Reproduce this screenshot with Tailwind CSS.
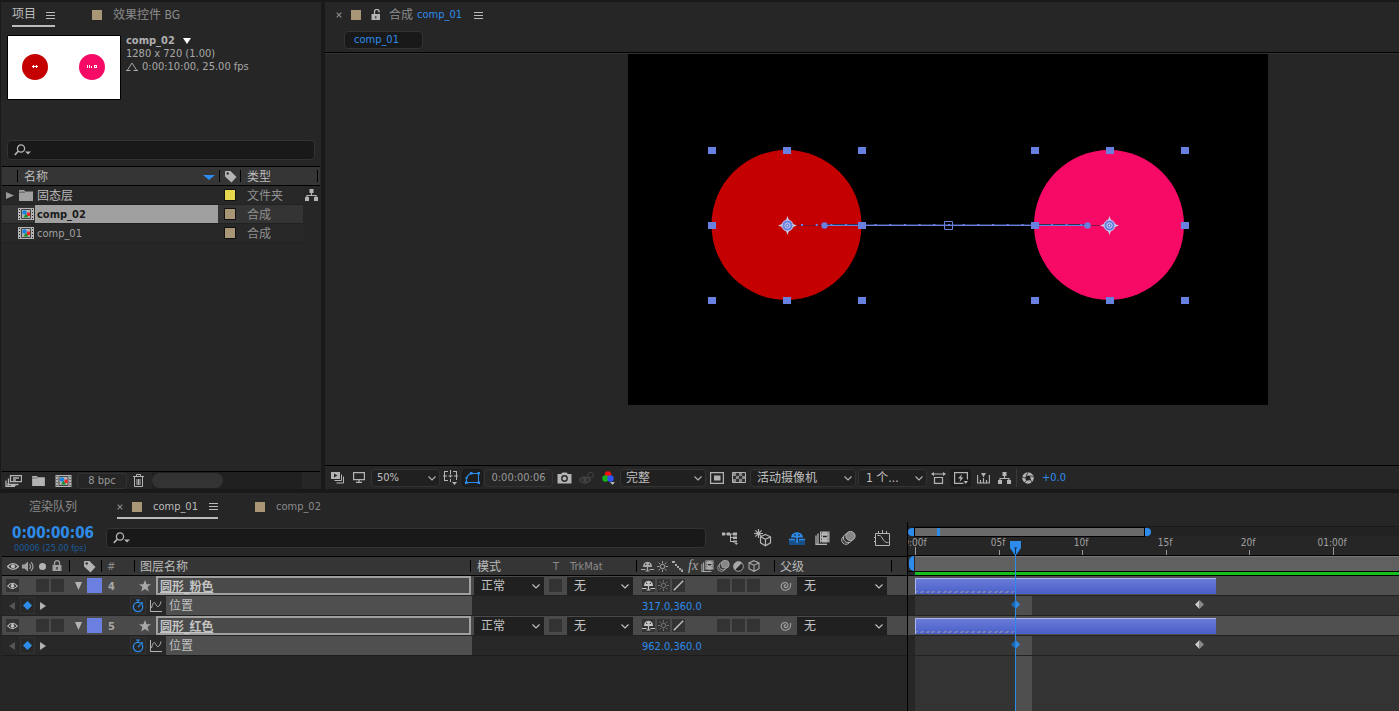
<!DOCTYPE html>
<html lang="zh-CN">
<head>
<meta charset="utf-8">
<title>comp_01</title>
<script src="https://cdn.jsdelivr.net/npm/@tailwindcss/browser@4"></script>
</head>
<body class="bg-[#191919] text-[#a0a0a0] font-['DejaVu_Sans_Condensed','Noto_Sans_CJK_SC',sans-serif] text-[11px] leading-4 overflow-hidden">
<svg class="hidden">
  <symbol id="menu" viewBox="0 0 9 9"><path d="M0 1.5h9M0 4.5h9M0 7.5h9" stroke="currentColor" fill="none"/></symbol>
  <symbol id="x" viewBox="0 0 6 6"><path d="M.7.7l4.6 4.6M5.3.7L.7 5.3" stroke="currentColor" stroke-width="1.2"/></symbol>
  <symbol id="chev" viewBox="0 0 8 5"><path d="M.5.5L4 4 7.5.5" stroke="currentColor" fill="none" stroke-width="1.1"/></symbol>
  <symbol id="search" viewBox="0 0 17 12"><circle cx="7" cy="4.5" r="3.6" fill="none" stroke="currentColor" stroke-width="1.3"/><path d="M4.5 7L.8 10.800" stroke="currentColor" stroke-width="1.7"/><path d="M11 7.5h6l-3 3z" fill="currentColor"/></symbol>
  <symbol id="tag" viewBox="0 0 13 13"><path d="M1 2Q1 1 2 1h4.500L12.500 7 7.500 12.500 1 6.500z" fill="currentColor"/><circle cx="3.700" cy="3.500" r="1.200" fill="#333"/></symbol>
  <symbol id="folder" viewBox="0 0 14 11"><path d="M0 0h5l1.500 1.500H14V11H0z" fill="currentColor"/><path d="M0 2.200h6" stroke="#333" stroke-width=".6"/></symbol>
  <symbol id="comp" viewBox="0 0 16 12"><path d="M0 0h16v12H0z" fill="#b4b4b4"/><path d="M1 1h1v1H1zM1 4h1v1H1zM1 7h1v1H1zM1 10h1v1H1zM14 1h1v1h-1zM14 4h1v1h-1zM14 7h1v1h-1zM14 10h1v1h-1z" fill="#222"/><path d="M3.500 1.500h9v9h-9z" fill="#b4b4b4" stroke="#444"/><path d="M9 4.500h3v3.500H9z" fill="#f22"/><circle cx="6.500" cy="4.500" r="2.200" fill="#1683e8"/><path d="M8 5.500l2.500 4h-5z" fill="#15922a"/></symbol>
  <symbol id="eye" viewBox="0 0 12 9"><path d="M.5 4.500Q6-1.500 11.500 4.500 6 10.500.5 4.500z" fill="none" stroke="currentColor" stroke-width="1.200"/><circle cx="6" cy="4.300" r="2.100" fill="currentColor"/></symbol>
  <symbol id="lock" viewBox="0 0 10 12"><path d="M.5 5h9v6h-9z" fill="currentColor"/><path d="M2.500 5V3.200a2.500 2.500 0 0 1 5 0V5" fill="none" stroke="currentColor" stroke-width="1.300"/><path d="M5 7v2.500" stroke="#222" stroke-width="1.200"/></symbol>
  <symbol id="shy" viewBox="0 0 13 11"><path d="M2 6Q2 1 6.500.8 11 1 11 6z" fill="currentColor"/><path d="M4 3.300h1.300M7.700 3.300H9" stroke="#222"/><path d="M0 8.500h4.500M8.500 8.500H13M6.500 5v5.500M4.500 10h4" stroke="currentColor" stroke-width="1.200"/></symbol>
  <symbol id="sun" viewBox="0 0 11 11"><circle cx="5.500" cy="5.500" r="2.200" fill="none" stroke="currentColor"/><path d="M5.500 0v2.500M5.500 8.500V11M0 5.500h2.500M8.500 5.500H11M1.600 1.600l1.600 1.600M7.800 7.800l1.600 1.600M9.400 1.600L7.800 3.200M3.200 7.800L1.600 9.400" stroke="currentColor" stroke-width=".9"/></symbol>
  <symbol id="slash" viewBox="0 0 11 11"><path d="M.8 10.200L10.200.8" stroke="currentColor" stroke-width="1.400"/></symbol>
  <symbol id="film" viewBox="0 0 15 14"><path d="M5 .5h9.500v11H5z" fill="currentColor"/><path d="M6.500 1.500v10M13 1.500v10" stroke="#262626" stroke-dasharray="1 2" stroke-width="1"/><path d="M8 5.500h3.800" stroke="#222" stroke-width="1.400"/><path d="M3 2.500v11h9M1 4.500V13.500h2" fill="none" stroke="currentColor" stroke-width="1.300"/></symbol>
  <symbol id="blur" viewBox="0 0 15 14"><circle cx="5" cy="9" r="4.300" fill="#333" stroke="currentColor"/><circle cx="7" cy="7" r="4.600" fill="#333" stroke="currentColor"/><circle cx="9.500" cy="5" r="4.600" fill="#868686" stroke="currentColor"/></symbol>
  <symbol id="cube" viewBox="0 0 12 12"><path d="M6 .7l5 2.200v5.800L6 11.300 1 8.700V2.900zM1 2.900l5 2.300 5-2.300M6 5.200v6" fill="none" stroke="currentColor" stroke-width="1.100"/></symbol>
  <symbol id="swirl" viewBox="0 0 13 13"><path d="M7 6.500C6 5 4.300 6.500 5.500 8 7 9.500 9.600 8 9 5.500 8 2.800 4 3 2.500 5.500 1 9 4 11.500 7 11.300c3.500-.3 5.500-4 4.500-7.300" fill="none" stroke="currentColor" stroke-width="1.100"/></symbol>
  <symbol id="star" viewBox="0 0 12 12"><path d="M6 0l1.600 4.300H12L8.500 7l1.300 4.600L6 8.900l-3.800 2.700L3.500 7 0 4.300h4.400z" fill="currentColor"/></symbol>
  <symbol id="watch" viewBox="0 0 11 14"><circle cx="5.500" cy="8" r="4.700" fill="none" stroke="currentColor" stroke-width="1.300"/><path d="M5.500 8L8 5.500M3.500 1h4M5.500 1v2M9 3l1.500 1.500" stroke="currentColor" stroke-width="1.200"/></symbol>
  <symbol id="graph" viewBox="0 0 12 12"><path d="M.5 0v11.500H12M1.500 8C4-1 5 3 6.500 5.500S10 6 11 1.500" fill="none" stroke="currentColor"/></symbol>
  <symbol id="flow" viewBox="0 0 13 12"><path d="M4.500 0h4v4h-4zM0 8h4v4H0zM9 8h4v4H9z" fill="currentColor"/><path d="M6.500 4v2.500M2 8.500V6.500h9v2" stroke="currentColor" fill="none" stroke-width="1.200"/></symbol>
  <symbol id="key" viewBox="0 0 10 10"><path d="M5 0L10 5 5 10 0 5z" fill="currentColor"/></symbol>
</svg>

<div class="flex h-screen flex-col pt-[2px]">
  <div class="flex h-[487px] shrink-0 gap-1">
    <!-- Project panel -->
    <section class="flex w-[321px] shrink-0 flex-col border-l border-[#191919] bg-[#262626]">
      <div class="flex h-7 pl-[11px]">
        <button class="flex h-[25px] items-center gap-[10px] border-b-2 border-[#bbb] text-xs text-[#bbb]">项目<svg class="mt-1 size-[9px]"><use href="#menu"/></svg></button>
        <button class="ml-[37px] flex h-[25px] items-center gap-[11px] text-xs text-[#8b8b8b]"><span class="size-[10px] bg-[#a89677]"></span>效果控件 BG</button>
      </div>
      <div class="flex gap-[5px] pl-[6px] pt-[5px]">
        <svg class="h-[65px] w-[114px] shrink-0" viewBox="0 0 114 65"><path d="M.5.5h113v64H.5z" fill="#fff" stroke="#000"/><circle cx="28" cy="32" r="13" fill="#c40000"/><circle cx="85" cy="32" r="13" fill="#f60a66"/><path d="M25 31.500h6M26.500 30v3M29.500 30v3M80.500 30v3M82.500 30v3M84.500 31v2M87 30.500h3M87 32.500h3M87.500 30v3M89.500 30v3" stroke="#fff" fill="none"/></svg>
        <div class="-mt-px leading-[13px] text-[#a8a8a8]">
          <div class="flex items-center gap-2 font-bold text-[#b0b0b0]">comp_02<svg class="h-[6px] w-2" viewBox="0 0 8 6"><path d="M0 0h8L4 6z" fill="#fff"/></svg></div>
          <div>1280 x 720 (1.00)</div>
          <div class="flex items-center gap-1"><svg class="h-[9px] w-3" viewBox="0 0 12 9"><path d="M1.500 8L6 1l4.500 7M0 8.500h4.500M7.500 8.500H12" fill="none" stroke="currentColor"/></svg>0:00:10:00, 25.00 fps</div>
        </div>
      </div>
      <label class="mx-[6px] mt-10 flex h-5 items-center rounded-sm border border-[#333] bg-[#191919] px-[6px] text-[#b4b4b4]"><svg class="h-3 w-[17px]"><use href="#search"/></svg><input aria-label="搜索项目" class="ml-1 min-w-0 flex-1 bg-transparent outline-none"></label>
      <div class="mx-px mt-[6px] flex h-5 items-center border-y border-black bg-[#353535] text-xs text-[#bbb]">
        <span class="h-3 w-[16px] border-r border-black"></span>
        <span class="ml-[6px] flex-1 pt-[2px]">名称</span>
        <svg class="mt-px h-[6px] w-3" viewBox="0 0 12 6"><path d="M0 1h12L6 6z" fill="#2d8ceb"/></svg>
        <span class="ml-1 h-3 border-r border-black"></span>
        <svg class="ml-1 size-[13px] text-[#b4b4b4]"><use href="#tag"/></svg>
        <span class="ml-[3px] h-3 border-r border-black"></span>
        <span class="ml-[6px] w-[70px] pt-[2px]">类型</span>
        <span class="mr-[2px] h-3 border-r border-black"></span>
      </div>
      <div class="flex flex-1">
        <div class="ml-px flex-1">
          <div class="flex h-[19px] items-center border-b border-[#222] bg-[#282828] text-xs"><svg class="ml-1 h-[7px] w-2" viewBox="0 0 8 7"><path d="M0 0l8 3.500L0 7z" fill="#999"/></svg><svg class="ml-[5px] h-[11px] w-[14px] text-[#a0a0a0]"><use href="#folder"/></svg><span class="ml-1 flex-1 pt-[2px] text-[#bbb]">固态层</span><span class="size-[10px] bg-[#e5d84c] outline outline-[#111]"></span><span class="ml-3 w-14 pt-[2px] text-[#909090]">文件夹</span></div>
          <div class="flex h-[19px] items-center border-b border-[#222] bg-[#343434] text-xs"><svg class="ml-4 h-3 w-4"><use href="#comp"/></svg><span class="ml-px h-[18px] flex-1 bg-[#a0a0a0] pl-[2px] pt-px text-[11px] font-bold leading-[18px] text-[#1a1a1a]">comp_02</span><span class="ml-[7px] size-[10px] bg-[#a89677] outline outline-[#111]"></span><span class="ml-3 w-14 pt-[2px] text-[#909090]">合成</span></div>
          <div class="flex h-[19px] items-center border-b border-[#222] bg-[#282828] text-xs"><svg class="ml-4 h-3 w-4"><use href="#comp"/></svg><span class="ml-[3px] flex-1 pt-[2px] text-[11px] text-[#a0a0a0]">comp_01</span><span class="size-[10px] bg-[#a89677] outline outline-[#111]"></span><span class="ml-3 w-14 pt-[2px] text-[#909090]">合成</span></div>
        </div>
        <div class="w-[18px] pt-[3px]"><svg class="ml-[2px] h-3 w-[13px] text-[#b4b4b4]"><use href="#flow"/></svg></div>
      </div>
      <div class="mx-px flex h-[18px] items-center border-t border-black text-[#b4b4b4]">
        <button aria-label="解释素材" class="ml-[3px]"><svg class="h-3 w-[17px]" viewBox="0 0 17 12"><path d="M5.500.7h11v6h-11zM8 3h6M8 5h3M3.500 3.500v6h10M1 5.500v6h9M3 8v3M6 10h5" fill="none" stroke="currentColor" stroke-width="1.300"/></svg></button>
        <button aria-label="新建文件夹" class="ml-[10px]"><svg class="h-[10px] w-[13px]"><use href="#folder"/></svg></button>
        <button aria-label="新建合成" class="ml-[10px]"><svg class="h-3 w-[17px]"><use href="#comp"/></svg></button>
        <button class="ml-[5px] h-4 w-[50px] rounded-sm border border-[#333] leading-[14px] text-[#999]">8 bpc</button>
        <button aria-label="删除" class="ml-[6px]"><svg class="h-[13px] w-[11px]" viewBox="0 0 11 13"><path d="M0 2.500h11M3.500 2V.5h4V2M1.500 3v9.500h8V3M4 5v6M5.500 5v6M7 5v6" fill="none" stroke="currentColor"/></svg></button>
        <div class="ml-2 h-full w-[150px] bg-[#202020]"><div class="mt-px h-[15px] w-[71px] rounded-full bg-[#333]"></div></div>
      </div>
    </section>

    <!-- Composition viewer -->
    <section class="flex min-w-0 flex-1 flex-col bg-[#262626]">
      <div class="flex h-6 items-center pl-[11px] pt-[2px] text-xs text-[#8b8b8b]">
        <svg class="size-[6px]"><use href="#x"/></svg>
        <span class="ml-[9px] size-[10px] bg-[#a89677]"></span>
        <svg class="ml-[10px] h-3 w-[10px] text-[#b4b4b4]" viewBox="0 0 10 12"><path d="M.5 5h8.500v6H.5z" fill="currentColor"/><path d="M3.500 5V2.700a2.300 2.300 0 0 1 4.600 0V3.500" fill="none" stroke="currentColor" stroke-width="1.300"/><path d="M4.800 7v2.500" stroke="#222"/></svg>
        <span class="ml-2">合成</span><span class="ml-1 pt-px text-[11px] text-[#2d8ceb]">comp_01</span>
        <svg class="ml-3 size-[9px] text-[#bbb]"><use href="#menu"/></svg>
      </div>
      <div class="flex h-[27px] border-b border-black pl-[19px] pt-[5px]"><button class="h-[18px] w-[79px] rounded-sm border border-[#333] bg-[#191919] pl-[9px] text-left text-[#2d8ceb]">comp_01</button></div>
      <div class="flex-1 overflow-hidden border-t border-[#333]">
        <svg class="ml-[303px] h-[351px] w-[640px] bg-black" viewBox="0 0 640 351">
          <circle cx="158.500" cy="171" r="75" fill="#c40000"/><circle cx="481" cy="171" r="75" fill="#f60a66"/>
          <path d="M168 171.500h28M460 171.500h12" stroke="#501030" stroke-opacity=".6"/>
          <path d="M196 170.500h264" stroke="#2c3358"/><path d="M196 171.500h264" stroke="#6880e0"/>
          <path d="M173 171h290" stroke="#6880e0" stroke-width="2" stroke-dasharray="2 12.700"/>
          <circle cx="196.500" cy="171.500" r="3.200" fill="#6880e0"/><circle cx="459.500" cy="171.500" r="3.200" fill="#6880e0"/>
          <path d="M316.500 167.500h8v8h-8z" fill="none" stroke="#6880e0"/>
          <g fill="#6880e0"><path id="hs" d="M80 93h8v7h-8zM155 93h8v7h-8zM230 93h8v7h-8zM80 168h8v7h-8zM230 168h8v7h-8zM80 243h8v7h-8zM155 243h8v7h-8zM230 243h8v7h-8z"/><use href="#hs" x="323"/></g>
          <g id="anc"><path d="M159.500 162l2.500 7 7 2.500-7 2.500-2.500 7-2.500-7-7-2.500 7-2.500z" fill="#c9cbe6"/><circle cx="159.500" cy="171.500" r="5.500" fill="#6880e0" stroke="#ccd0ee"/><circle cx="159.500" cy="171.500" r="2.600" fill="none" stroke="#ccd0ee"/><circle cx="159.500" cy="171.500" r=".7" fill="#fff"/></g><use href="#anc" x="322"/>
        </svg>
      </div>
      <div class="flex h-6 items-center border-t border-black text-[#b4b4b4]">
        <svg class="ml-[6px] h-3 w-[13px]" viewBox="0 0 13 12"><path d="M0 0h9v7H0z" fill="currentColor"/><path d="M3 1.500l3.500 2L3 5.500z" fill="#262626"/><path d="M10.500 2.500v6h-7M12.500 4.500v6.500h-7" stroke="currentColor" fill="none"/></svg>
        <svg class="ml-[9px] h-[11px] w-3" viewBox="0 0 12 11"><path d="M.6.6h10.800v7H.6zM6 7.500V10M3 10.400h6" stroke="currentColor" fill="none" stroke-width="1.200"/></svg>
        <div class="relative ml-[6px]"><select aria-label="放大率" class="h-[18px] w-[69px] appearance-none rounded-sm border border-[#333] bg-[#202020] pl-[5px] text-[#c0c0c0]"><option>50%</option></select><svg class="pointer-events-none absolute right-1 top-[7px] h-[5px] w-2"><use href="#chev"/></svg></div>
        <svg class="ml-[3px] h-[15px] w-[15px]" viewBox="0 0 15 15"><path d="M1.500 2v8M13.500 2v8M1 1.500h4M10 1.500h4M1 10.500h4M7.500 0v4M7.500 9v3M0 6h4M11 6h4M5.500 6h4M7.500 4.500v3" fill="none" stroke="currentColor"/><path d="M9 12h5l-2.500 3z" fill="currentColor"/></svg>
        <button aria-label="切换蒙版" class="ml-[4px] flex h-[18px] w-[21px] items-center justify-center rounded-sm border border-[#191919] bg-[#1d1d1d] text-[#2d8ceb]"><svg class="h-3 w-[15px] shrink-0" viewBox="0 0 15 12"><path d="M1.500 10.500V6.500Q2 3.500 5.500 1.500h8v9z" fill="none" stroke="currentColor" stroke-width="1.100"/><path d="M0 9.500h2.500V12H0zM12.500 9.500H15V12h-2.500zM12.500 0H15v2.500h-2.500zM5 0h2.500v2.500H5zM.5 5h2v2h-2z" fill="currentColor"/></svg></button>
        <button class="ml-px h-[18px] w-[69px] rounded-sm border border-[#333] text-[#999]">0:00:00:06</button>
        <svg class="ml-1 h-3 w-[15px]" viewBox="0 0 15 12"><path d="M.5 2h3.500L5.500.5h4L11 2h3.500v9.500H.5z" fill="currentColor"/><circle cx="7.500" cy="6.500" r="2.700" fill="none" stroke="#262626" stroke-width="1.400"/></svg>
        <svg class="ml-[7px] h-3 w-[15px] text-[#444]" viewBox="0 0 15 12"><path d="M.5 8Q6 2 11.500 8 6 14 .5 8z" fill="none" stroke="currentColor" stroke-width="1.300"/><circle cx="6" cy="8" r="2" fill="currentColor"/><circle cx="11.500" cy="3" r="2.700" fill="none" stroke="currentColor"/></svg>
        <svg class="ml-2 h-[14px] w-[14px]" viewBox="0 0 14 14"><circle cx="6" cy="3.500" r="3.200" fill="#f21010"/><circle cx="3.500" cy="7.500" r="3.200" fill="#16b416"/><circle cx="8.500" cy="7.500" r="3.200" fill="#2f55f5"/><path d="M8 11h5l-2.500 3z" fill="currentColor"/></svg>
        <div class="relative ml-1"><select aria-label="分辨率" class="h-[18px] w-[86px] appearance-none rounded-sm border border-[#333] bg-[#202020] pl-[5px] text-xs leading-4 text-[#c0c0c0]"><option>完整</option></select><svg class="pointer-events-none absolute right-1 top-[7px] h-[5px] w-2"><use href="#chev"/></svg></div>
        <svg class="ml-[4px] h-3 w-[14px]" viewBox="0 0 14 12"><path d="M.6.6h12.800v10.800H.6z" fill="none" stroke="currentColor" stroke-width="1.200"/><path d="M4 3.500h6.500v5H4z" fill="currentColor"/></svg>
        <svg class="ml-2 h-[11px] w-[14px]" viewBox="0 0 14 11"><path d="M.5.5h13v10H.5z" fill="#333" stroke="currentColor"/><path d="M1 1h3v3H1zM7 1h3v3H7zM4 4h3v3H4zM10 4h3v3h-3zM1 7h3v3H1zM7 7h3v3H7z" fill="#8a8a8a"/></svg>
        <div class="relative ml-1"><select aria-label="3D 视图" class="h-[18px] w-[106px] appearance-none rounded-sm border border-[#333] bg-[#202020] pl-[6px] text-xs leading-4 text-[#c0c0c0]"><option>活动摄像机</option></select><svg class="pointer-events-none absolute right-1 top-[7px] h-[5px] w-2"><use href="#chev"/></svg></div>
        <div class="relative ml-[2px]"><select aria-label="视图布局" class="h-[18px] w-[69px] appearance-none rounded-sm border border-[#333] bg-[#202020] pl-[7px] text-xs leading-4 text-[#c0c0c0]"><option>1 个...</option></select><svg class="pointer-events-none absolute right-1 top-[7px] h-[5px] w-2"><use href="#chev"/></svg></div>
        <svg class="ml-1 h-3 w-[15px]" viewBox="0 0 15 12"><path d="M1 2h13M3.500 5.500h8v5.800h-8z" fill="none" stroke="currentColor" stroke-width="1.200"/><path d="M3 0v4L0 2zM12 0v4l3-2z" fill="currentColor"/></svg>
        <button aria-label="快速预览" class="ml-1 flex h-[18px] w-[21px] items-center justify-center bg-[#1d1d1d]"><svg class="h-3 w-[14px]" viewBox="0 0 14 12"><path d="M9.500 11.400H.6V.6h12.800v7" fill="none" stroke="currentColor" stroke-width="1.200"/><path d="M8 2L4 6.500h2.500L5.500 10 9.500 5.500H7zM9.500 9h4.500l-2.200 3z" fill="currentColor"/></svg></button>
        <svg class="ml-[6px] h-3 w-[13px]" viewBox="0 0 13 12"><path d="M.6 3v8h11.800V3M3.500 8v3M6.500 6v5M9.500 8v3M6.500 5V2" fill="none" stroke="currentColor" stroke-width="1.100"/><path d="M4 1h5L6.500 5z" fill="currentColor"/></svg>
        <svg class="ml-2 h-3 w-[13px]"><use href="#flow"/></svg>
        <span class="ml-[5px] h-[18px] border-r border-[#3a3a3a]"></span>
        <svg class="ml-[5px] size-3" viewBox="0 0 12 12"><circle cx="6" cy="6" r="4.200" fill="none" stroke="currentColor" stroke-width="3.200"/><path d="M4 4L6 .3M7.500 3.800l4 .7M8.300 7l1.500 3.500M5 8.200L2 11M3.700 6L0 5" stroke="#262626" stroke-width=".8"/></svg>
        <span class="ml-2 text-[#2d8ceb]">+0.0</span>
      </div>
    </section>
  </div>

  <!-- Timeline panel -->
  <section class="mt-1 flex min-h-0 flex-1 flex-col bg-[#262626]">
    <div class="flex h-[29px] items-start text-xs text-[#8b8b8b]">
      <button class="ml-[29px] h-[26px] w-12 pt-px">渲染队列</button>
      <button class="ml-10 flex h-[26px] w-[101px] items-center border-b-2 border-[#bbb] pt-[3px] text-[11px] text-[#bbb]"><svg class="size-[6px] text-[#888]"><use href="#x"/></svg><span class="ml-[9px] size-[10px] bg-[#a89677]"></span><span class="ml-[11px] flex-1 pt-px text-left">comp_01</span><svg class="size-[9px]"><use href="#menu"/></svg></button>
      <button class="ml-[37px] flex h-[26px] items-center gap-[11px] pt-px text-[11px]"><span class="size-[10px] bg-[#a89677]"></span><span class="pt-[2px]">comp_02</span></button>
    </div>
    <div class="flex min-h-0 flex-1">
      <div class="flex w-[908px] shrink-0 flex-col border-r border-black">
        <div class="flex h-[34px] pl-3 text-[#b4b4b4]">
          <div class="w-[94px] shrink-0"><div class="text-[15px] font-bold leading-[22px] text-[#2d8ceb]">0:00:00:06</div><div class="pl-[2px] text-[9px] leading-[9px] text-[#1b5c9c]">00006 (25.00 fps)</div></div>
          <label class="mt-[6px] flex h-5 w-[600px] items-center rounded-sm border border-[#333] bg-[#191919] px-[6px]"><svg class="h-3 w-[17px]"><use href="#search"/></svg><input aria-label="搜索图层" class="ml-1 min-w-0 flex-1 bg-transparent outline-none"></label>
          <div class="flex h-8 items-center">
            <svg class="ml-4 h-[13px] w-4" viewBox="0 0 16 13"><path d="M3 2h9M8.500 2v8M8.500 5.500h5M8.500 9.500h3" stroke="currentColor" fill="none"/><path d="M0 .5h3v3H0zM5 .5h3v3H5zM11 .5h4v3h-4zM11 4.500h4v2.500h-4zM11 8.500h4v2h-4zM12.500 11h3.500l-1.700 2z" fill="currentColor"/></svg>
            <svg class="ml-4 size-[18px]" viewBox="0 0 18 18"><path d="M4.500 0v9M0 4.500h9M1.300 1.300l6.400 6.400M7.700 1.300L1.300 7.700" stroke="currentColor" stroke-width="1.100"/><circle cx="4.500" cy="4.500" r="2" fill="currentColor"/><path d="M11.500 5.500l5 2.300v6l-5 3-5-3v-6zM6.500 7.800l5 2.500 5-2.500M11.500 10.300v6" fill="#262626" stroke="currentColor" stroke-width="1.200"/></svg>
            <svg class="ml-[17px] h-[14px] w-4 text-[#2d8ceb]" viewBox="0 0 16 14"><path d="M0 9h16v5H0z" fill="#174f86"/><path d="M2 6.500Q2.500 1.500 8 1.200 13.500 1.500 14 6.500z" fill="currentColor"/><path d="M5 4h2M9 4h2" stroke="#222"/><path d="M0 8.500h6M10 8.500h6M8 5v7" stroke="currentColor" stroke-width="1.600"/></svg>
            <svg class="ml-[10px] h-[14px] w-[15px]"><use href="#film"/></svg>
            <svg class="ml-[11px] h-[14px] w-[15px]"><use href="#blur"/></svg>
            <svg class="ml-[18px] size-[17px]" viewBox="0 0 17 17"><path d="M1.500 3.500h14v12h-14zM4.500 1v2M8.500 0v3M12.500 1v2M3.500 5.500h2c3 0 3 7 8 7h1M0 7.500h1M0 11.500h1" fill="none" stroke="currentColor"/></svg>
          </div>
        </div>
        <div class="ml-[2px] flex h-5 shrink-0 items-center border-y border-black bg-[#353535] text-xs text-[#bbb]">
          <div class="flex h-3 w-[68px] items-center border-r border-black pl-[5px]">
            <svg class="h-[9px] w-3"><use href="#eye"/></svg>
            <svg class="ml-[3px] h-[11px] w-3 text-[#a0a0a0]" viewBox="0 0 12 11"><path d="M0 3.500h2.500L6 .5v10L2.500 7.500H0z" fill="currentColor"/><path d="M7.500 3q2 2.500 0 5M9 1.200q4 4.300 0 8.600" fill="none" stroke="currentColor" stroke-width="1.200"/></svg>
            <span class="ml-[5px] size-[7px] rounded-full bg-[#b4b4b4]"></span>
            <svg class="ml-[6px] h-3 w-[10px] text-[#a0a0a0]"><use href="#lock"/></svg>
          </div>
          <div class="flex h-3 w-8 items-center border-r border-black pl-[13px]"><svg class="size-[13px] shrink-0 text-[#b4b4b4]"><use href="#tag"/></svg></div>
          <div class="flex h-3 w-[33px] items-center border-r border-black pl-[5px] text-[11px] text-[#8b8b8b]"><span class="pt-[2px]">#</span></div>
          <div class="flex h-3 w-[336px] items-center border-r border-black pl-[5px]"><span class="pt-[2px]">图层名称</span></div>
          <div class="w-[82px] pl-[6px] pt-[2px]">模式</div>
          <div class="w-[17px] pt-[2px] text-[11px] text-[#8b8b8b]">T</div>
          <div class="flex h-3 w-[67px] items-center border-r border-black text-[11px] text-[#8b8b8b]"><span class="pt-[2px]">TrkMat</span></div>
          <div class="flex h-3 w-[138px] items-center border-r border-black pl-1 text-[#a8a8a8]">
            <svg class="h-[11px] w-[13px]"><use href="#shy"/></svg><svg class="ml-[3px] size-[11px]"><use href="#sun"/></svg>
            <svg class="ml-1 size-[11px]" viewBox="0 0 11 11"><path d="M0 0h3v2H0zM3 3h2v2H3zM5 5h2v2H5zM7 7h2v2H7zM9 8.500h2v2.500H9z" fill="currentColor"/></svg>
            <span class="ml-[5px] w-3 font-['Liberation_Serif'] text-sm italic">fx</span>
            <svg class="ml-px h-3 w-[13px]"><use href="#film"/></svg><svg class="ml-[3px] h-3 w-[13px]"><use href="#blur"/></svg>
            <svg class="ml-[3px] size-[11px]" viewBox="0 0 11 11"><circle cx="5.500" cy="5.500" r="4.800" fill="#262626" stroke="currentColor"/><path d="M9 2A4.900 4.900 0 1 0 2 9z" fill="currentColor"/></svg>
            <svg class="ml-1 size-3"><use href="#cube"/></svg>
          </div>
          <div class="flex h-3 w-[117px] items-center border-r border-black pl-[5px]"><span class="pt-[2px]">父级</span></div>
        </div>

        <!-- Layer 4 -->
        <div class="ml-[2px] flex h-5 shrink-0 items-center border-b border-[#222] bg-[#4a4a4a] text-xs text-[#c4c4c4]">
          <button aria-label="显示" class="ml-1 flex size-[13px] items-center justify-center bg-[#333]"><svg class="h-[8px] w-[11px]"><use href="#eye"/></svg></button>
          <button aria-label="独奏" class="ml-[17px] size-[13px] bg-[#333]"></button><button aria-label="锁定" class="ml-[2px] size-[13px] bg-[#333]"></button>
          <svg class="ml-[11px] h-2 w-[7px]" viewBox="0 0 7 8"><path d="M0 0h7L3.500 8z" fill="#b4b4b4"/></svg>
          <span class="ml-[5px] size-[15px] bg-[#6a7fe0]"></span>
          <span class="ml-[6px] w-[31px] pt-[3px] text-[11px] font-bold text-[#a8a8a8]">4</span>
          <svg class="size-3 text-[#a8a8a8]"><use href="#star"/></svg>
          <button class="ml-[5px] flex h-[19px] w-[315px] items-center border-2 border-[#a0a0a0] pl-[2px] pt-[2px] text-left font-bold underline">圆形_粉色</button>
          <div class="relative ml-[3px]"><select aria-label="图层4模式" class="h-[18px] w-[70px] appearance-none bg-[#202020] pl-[7px] leading-4"><option>正常</option></select><svg class="pointer-events-none absolute right-1 top-[7px] h-[5px] w-2"><use href="#chev"/></svg></div>
          <button aria-label="保留透明度" class="ml-[5px] size-[13px] bg-[#333]"></button>
          <div class="relative ml-[5px]"><select aria-label="图层4轨道遮罩" class="h-[18px] w-[66px] appearance-none bg-[#202020] pl-[7px] leading-4"><option>无</option></select><svg class="pointer-events-none absolute right-1 top-[7px] h-[5px] w-2"><use href="#chev"/></svg></div>
          <div class="ml-[9px] flex gap-[2px]"><span class="flex size-[13px] items-center justify-center bg-[#333]"><svg class="h-[11px] w-[13px]"><use href="#shy"/></svg></span><span class="flex size-[13px] items-center justify-center bg-[#333] text-[#777]"><svg class="size-[11px]"><use href="#sun"/></svg></span><span class="flex size-[13px] items-center justify-center bg-[#333]"><svg class="size-[11px]"><use href="#slash"/></svg></span></div>
          <div class="ml-8 flex gap-[2px]"><span class="size-[13px] bg-[#333]"></span><span class="size-[13px] bg-[#333]"></span><span class="size-[13px] bg-[#333]"></span></div>
          <svg class="ml-[19px] size-[13px] text-[#a4a4a4]"><use href="#swirl"/></svg>
          <div class="relative ml-[5px]"><select aria-label="图层4父级" class="h-[18px] w-[90px] appearance-none bg-[#202020] pl-[7px] leading-4"><option>无</option></select><svg class="pointer-events-none absolute right-1 top-[7px] h-[5px] w-2"><use href="#chev"/></svg></div>
        </div>
        <div class="ml-[2px] flex h-5 shrink-0 items-center border-b border-[#222] bg-[#282828] text-xs">
          <svg class="ml-[7px] h-2 w-[6px]" viewBox="0 0 6 8"><path d="M6 0v8L0 4z" fill="#555"/></svg>
          <button aria-label="关键帧" class="ml-[5px] flex h-[17px] w-[15px] items-center justify-center border border-[#333] text-[#2d8ceb]"><svg class="size-[9px] shrink-0"><use href="#key"/></svg></button>
          <svg class="ml-[5px] h-2 w-[6px]" viewBox="0 0 6 8"><path d="M0 0v8l6-4z" fill="#b4b4b4"/></svg>
          <button aria-label="位置动画" class="ml-[84px] flex h-[17px] w-4 items-center justify-center border border-[#333] text-[#2d8ceb]"><svg class="h-[14px] w-[12px] shrink-0"><use href="#watch"/></svg></button>
          <svg class="ml-1 size-3 text-[#b4b4b4]"><use href="#graph"/></svg>
          <span class="ml-1 h-[19px] w-[306px] bg-[#4f4f4f] pl-[3px] pt-px leading-[19px] text-[#c0c0c0]">位置</span>
          <button class="ml-[170px] pt-[3px] text-[11px] text-[#2d8ceb]">317.0,360.0</button>
        </div>

        <!-- Layer 5 -->
        <div class="ml-[2px] flex h-5 shrink-0 items-center border-b border-[#222] bg-[#4a4a4a] text-xs text-[#c4c4c4]">
          <button aria-label="显示" class="ml-1 flex size-[13px] items-center justify-center bg-[#333]"><svg class="h-[8px] w-[11px]"><use href="#eye"/></svg></button>
          <button aria-label="独奏" class="ml-[17px] size-[13px] bg-[#333]"></button><button aria-label="锁定" class="ml-[2px] size-[13px] bg-[#333]"></button>
          <svg class="ml-[11px] h-2 w-[7px]" viewBox="0 0 7 8"><path d="M0 0h7L3.500 8z" fill="#b4b4b4"/></svg>
          <span class="ml-[5px] size-[15px] bg-[#6a7fe0]"></span>
          <span class="ml-[6px] w-[31px] pt-[3px] text-[11px] font-bold text-[#a8a8a8]">5</span>
          <svg class="size-3 text-[#a8a8a8]"><use href="#star"/></svg>
          <button class="ml-[5px] flex h-[19px] w-[315px] items-center border-2 border-[#a0a0a0] pl-[2px] pt-[2px] text-left font-bold underline">圆形_红色</button>
          <div class="relative ml-[3px]"><select aria-label="图层5模式" class="h-[18px] w-[70px] appearance-none bg-[#202020] pl-[7px] leading-4"><option>正常</option></select><svg class="pointer-events-none absolute right-1 top-[7px] h-[5px] w-2"><use href="#chev"/></svg></div>
          <button aria-label="保留透明度" class="ml-[5px] size-[13px] bg-[#333]"></button>
          <div class="relative ml-[5px]"><select aria-label="图层5轨道遮罩" class="h-[18px] w-[66px] appearance-none bg-[#202020] pl-[7px] leading-4"><option>无</option></select><svg class="pointer-events-none absolute right-1 top-[7px] h-[5px] w-2"><use href="#chev"/></svg></div>
          <div class="ml-[9px] flex gap-[2px]"><span class="flex size-[13px] items-center justify-center bg-[#333]"><svg class="h-[11px] w-[13px]"><use href="#shy"/></svg></span><span class="flex size-[13px] items-center justify-center bg-[#333] text-[#777]"><svg class="size-[11px]"><use href="#sun"/></svg></span><span class="flex size-[13px] items-center justify-center bg-[#333]"><svg class="size-[11px]"><use href="#slash"/></svg></span></div>
          <div class="ml-8 flex gap-[2px]"><span class="size-[13px] bg-[#333]"></span><span class="size-[13px] bg-[#333]"></span><span class="size-[13px] bg-[#333]"></span></div>
          <svg class="ml-[19px] size-[13px] text-[#a4a4a4]"><use href="#swirl"/></svg>
          <div class="relative ml-[5px]"><select aria-label="图层5父级" class="h-[18px] w-[90px] appearance-none bg-[#202020] pl-[7px] leading-4"><option>无</option></select><svg class="pointer-events-none absolute right-1 top-[7px] h-[5px] w-2"><use href="#chev"/></svg></div>
        </div>
        <div class="ml-[2px] flex h-5 shrink-0 items-center border-b border-[#1c1c1c] bg-[#282828] text-xs">
          <svg class="ml-[7px] h-2 w-[6px]" viewBox="0 0 6 8"><path d="M6 0v8L0 4z" fill="#555"/></svg>
          <button aria-label="关键帧" class="ml-[5px] flex h-[17px] w-[15px] items-center justify-center border border-[#333] text-[#2d8ceb]"><svg class="size-[9px] shrink-0"><use href="#key"/></svg></button>
          <svg class="ml-[5px] h-2 w-[6px]" viewBox="0 0 6 8"><path d="M0 0v8l6-4z" fill="#b4b4b4"/></svg>
          <button aria-label="位置动画" class="ml-[84px] flex h-[17px] w-4 items-center justify-center border border-[#333] text-[#2d8ceb]"><svg class="h-[14px] w-[12px] shrink-0"><use href="#watch"/></svg></button>
          <svg class="ml-1 size-3 text-[#b4b4b4]"><use href="#graph"/></svg>
          <span class="ml-1 h-[19px] w-[306px] bg-[#4f4f4f] pl-[3px] pt-px leading-[19px] text-[#c0c0c0]">位置</span>
          <button class="ml-[170px] pt-[3px] text-[11px] text-[#2d8ceb]">962.0,360.0</button>
        </div>
      </div>

      <!-- Time graph -->
      <div class="relative flex min-w-0 flex-1 flex-col overflow-hidden pt-1">
        <div class="flex h-[10px] shrink-0 items-center border-t border-[#1a1a1a] bg-[#222]">
          <span class="h-2 w-[6px] rounded-l-full bg-[#2d8ceb]"></span>
          <div class="h-[10px] w-[231px] border border-black bg-[#6a6a6a]"><div class="ml-[22px] h-full w-[3px] bg-[#2d8ceb]"></div></div>
          <span class="h-2 w-[6px] rounded-r-full bg-[#2d8ceb]"></span>
        </div>
        <!-- Ruler: tick offsets are frame times on the time scale -->
        <div class="relative h-[19px] shrink-0 text-[10px] leading-[14px] text-[#a0a0a0]">
          <span class="absolute -translate-x-1/2" style="left:7px">0:00f</span><i class="absolute bottom-0 h-2 border-l border-[#999]" style="left:7px"></i>
          <span class="absolute -translate-x-1/2" style="left:90px">05f</span><i class="absolute bottom-0 h-[5px] border-l border-[#999]" style="left:91px"></i>
          <span class="absolute -translate-x-1/2" style="left:173px">10f</span><i class="absolute bottom-0 h-[5px] border-l border-[#999]" style="left:174px"></i>
          <span class="absolute -translate-x-1/2" style="left:257px">15f</span><i class="absolute bottom-0 h-[5px] border-l border-[#999]" style="left:258px"></i>
          <span class="absolute -translate-x-1/2" style="left:340px">20f</span><i class="absolute bottom-0 h-[5px] border-l border-[#999]" style="left:341px"></i>
          <span class="absolute -translate-x-1/2" style="left:424px">01:00f</span><i class="absolute bottom-0 h-2 border-l border-[#999]" style="left:425px"></i>
        </div>
        <div class="flex h-[17px] shrink-0 border-y border-black"><span class="ml-px w-[5px] rounded-l-full bg-[#2d8ceb]"></span><span class="ml-px flex-1 border-t border-[#777] bg-[#606060]"></span></div>
        <div class="h-1 shrink-0 border-b border-black pl-[7px]"><div class="h-[3px] bg-[#14c01e]"></div></div>
        <div class="h-5 shrink-0 border-b border-[#222] bg-[#505050] pl-[7px] pt-[2px]"><div class="h-4 w-[301px] border-l border-t border-[#a9b4ec] bg-linear-to-b from-[#6a7bd8] to-[#4a5ec8]"><div class="h-3"></div><div class="h-[2px] w-[100px] bg-[repeating-linear-gradient(135deg,#7c84b8_0px,#7c84b8_2px,transparent_2px,transparent_4px)]"></div></div></div>
        <div class="flex h-5 shrink-0 border-b border-[#222] bg-[#353535]"><span class="w-[7px] bg-[#262626]"></span></div>
        <div class="h-5 shrink-0 border-b border-[#222] bg-[#505050] pl-[7px] pt-[2px]"><div class="h-4 w-[301px] border-l border-t border-[#a9b4ec] bg-linear-to-b from-[#6a7bd8] to-[#4a5ec8]"><div class="h-3"></div><div class="h-[2px] w-[100px] bg-[repeating-linear-gradient(135deg,#7c84b8_0px,#7c84b8_2px,transparent_2px,transparent_4px)]"></div></div></div>
        <div class="flex h-5 shrink-0 border-b border-[#222] bg-[#353535]"><span class="w-[7px] bg-[#262626]"></span></div>
        <div class="flex flex-1 bg-[#333]"><span class="w-[7px] bg-[#262626]"></span></div>
        <!-- Current frame, keyframes and playhead over the tracks -->
        <div class="absolute top-[74px] h-[19px] w-4 bg-[#4f4f4f]" style="left:108px"></div>
        <div class="absolute top-[114px] h-[19px] w-4 bg-[#4f4f4f]" style="left:108px"></div>
        <div class="absolute bottom-0 top-[134px] w-4 bg-[#4f4f4f]" style="left:108px"></div>
        <div class="absolute bottom-0 top-8 w-px bg-[#2d8ceb]" style="left:107px"></div>
        <svg class="absolute top-[78px] size-[9px]" style="left:103px" viewBox="0 0 9 9"><path d="M4.500 0L0 4.500 4.500 9z" fill="#1b66b0"/><path d="M4.500 0L9 4.500 4.500 9z" fill="#2d8ceb"/></svg>
        <svg class="absolute top-[118px] size-[9px]" style="left:103px" viewBox="0 0 9 9"><path d="M4.500 0L0 4.500 4.500 9z" fill="#1b66b0"/><path d="M4.500 0L9 4.500 4.500 9z" fill="#2d8ceb"/></svg>
        <svg class="absolute top-[78px] size-[9px]" style="left:287px" viewBox="0 0 9 9"><path d="M4.500 0L0 4.500 4.500 9z" fill="#ccc"/><path d="M4.500 0L9 4.500 4.500 9z" fill="#888"/></svg>
        <svg class="absolute top-[118px] size-[9px]" style="left:287px" viewBox="0 0 9 9"><path d="M4.500 0L0 4.500 4.500 9z" fill="#ccc"/><path d="M4.500 0L9 4.500 4.500 9z" fill="#888"/></svg>
        <svg class="absolute top-[19px] h-[14px] w-[11px]" style="left:102px" viewBox="0 0 11 14"><path d="M0 0h11v7L6.500 13.500h-2L0 7z" fill="#2d8ceb"/><path d="M4 7h3M5.500 7v6" stroke="#152f4c"/></svg>
      </div>
    </div>
  </section>
</div>
</body>
</html>
